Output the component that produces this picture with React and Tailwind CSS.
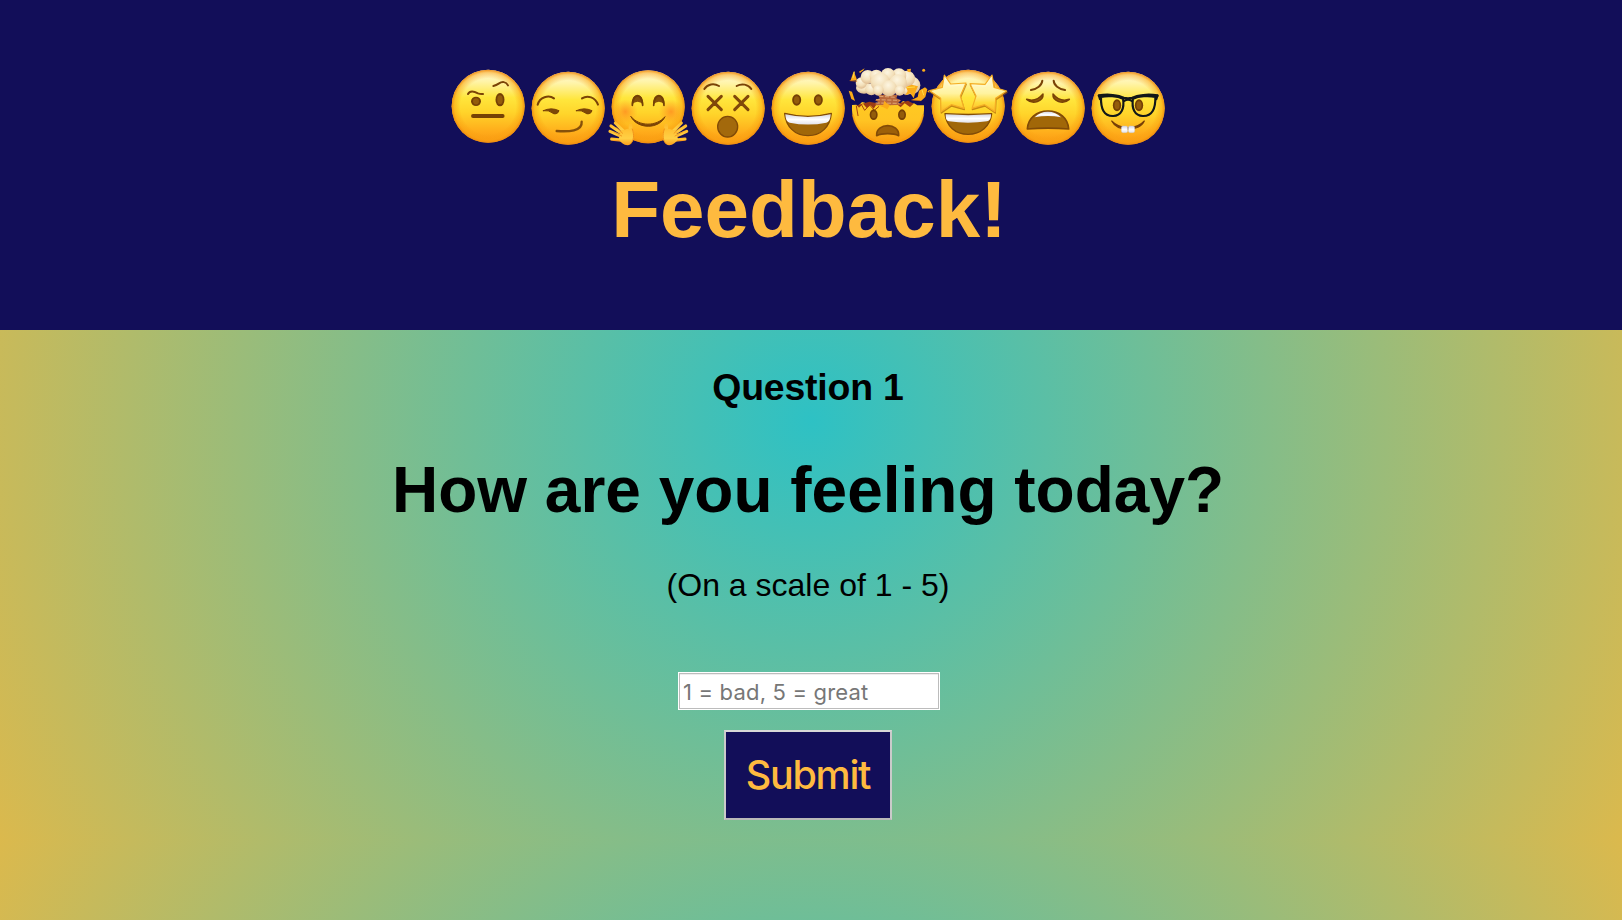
import React from "react";

const BROWN = "#7a4306";

function Emoji({ label, children }) {
  return (
    <svg
      role="img"
      aria-label={label}
      viewBox="24 15 240 288"
      className="h-24 w-20 shrink-0 overflow-visible"
      fill="none"
      strokeLinecap="round"
      strokeLinejoin="round"
    >
      {children}
    </svg>
  );
}

function Defs() {
  return (
    <svg className="absolute size-0" aria-hidden="true">
      <defs>
        <linearGradient id="face" x1="0" y1="0" x2="0" y2="1">
          <stop offset="0" stopColor="#fffbe0" />
          <stop offset="0.16" stopColor="#fff4a8" />
          <stop offset="0.38" stopColor="#ffe63c" />
          <stop offset="0.58" stopColor="#ffd42a" />
          <stop offset="0.85" stopColor="#ffab1a" />
          <stop offset="1" stopColor="#fa9a14" />
        </linearGradient>
        <radialGradient id="rim" cx="0.5" cy="0.5" r="0.5">
          <stop offset="0.76" stopColor="#f79a0c" stopOpacity="0" />
          <stop offset="0.92" stopColor="#f9a010" stopOpacity="0.5" />
          <stop offset="1" stopColor="#ee8a10" stopOpacity="0.95" />
        </radialGradient>
        <radialGradient id="blush">
          <stop offset="0" stopColor="#ff6a1c" stopOpacity="0.55" />
          <stop offset="1" stopColor="#ff7a1c" stopOpacity="0" />
        </radialGradient>
        <linearGradient id="star" x1="0" y1="0" x2="0" y2="1">
          <stop offset="0" stopColor="#fffbe0" />
          <stop offset="0.5" stopColor="#fff3a0" />
          <stop offset="0.75" stopColor="#ffdc3c" />
          <stop offset="1" stopColor="#fbb828" />
        </linearGradient>
        <linearGradient id="teeth" x1="0" y1="0" x2="0" y2="1">
          <stop offset="0" stopColor="#d4d6e4" />
          <stop offset="0.5" stopColor="#ffffff" />
          <stop offset="1" stopColor="#e2e2ea" />
        </linearGradient>
        <linearGradient id="hand" x1="0" y1="0" x2="0" y2="1">
          <stop offset="0" stopColor="#ffbd2e" />
          <stop offset="0.6" stopColor="#ffd045" />
          <stop offset="1" stopColor="#fb9d1c" />
        </linearGradient>
        <linearGradient id="bowl" x1="0" y1="0" x2="0" y2="1">
          <stop offset="0" stopColor="#ffca22" />
          <stop offset="0.45" stopColor="#ffc423" />
          <stop offset="1" stopColor="#f9980f" />
        </linearGradient>
        <radialGradient id="puff" cx="0.45" cy="0.3" r="0.75">
          <stop offset="0" stopColor="#fdf6e2" />
          <stop offset="0.55" stopColor="#f3e0ba" />
          <stop offset="1" stopColor="#dcb588" />
        </radialGradient>
      </defs>
    </svg>
  );
}

function Face({ cy }) {
  return (
    <>
      <circle cx="144.5" cy={cy} r="109.5" fill="url(#face)" />
      <circle cx="144.5" cy={cy} r="109.5" fill="url(#rim)" />
    </>
  );
}

function Eye({ x, y, rx = 13.5, ry = 17 }) {
  return (
    <>
      <ellipse cx={x} cy={y} rx={rx} ry={ry} fill="#754005" />
      <ellipse cx={x} cy={y} rx={rx * 0.6} ry={ry * 0.66} fill="#935c0b" />
    </>
  );
}

function RaisedBrow() {
  return (
    <Emoji label="face with raised eyebrow">
      <Face cy={154} />
      <path d="M84 117C91 104 104 110 114 115Q121 118 129 117" stroke={BROWN} strokeWidth="6" />
      <path d="M160 93Q169 91 176 86C186 79 198 79 204 91" stroke={BROWN} strokeWidth="6" />
      <Eye x={108} y={139} rx={15} ry={14} />
      <Eye x={180} y={134} rx={13.5} ry={20} />
      <path d="M99 183H188" stroke="#764105" strokeWidth="11.5" />
    </Emoji>
  );
}

function Smirk() {
  return (
    <Emoji label="smirking face">
      <Face cy={160} />
      <path d="M53 149C59 126 86 119 102 130" stroke={BROWN} strokeWidth="6" />
      <path d="M186 130C203 119 226 127 234 149" stroke={BROWN} strokeWidth="6" />
      <path d="M70 167Q94 156 117 167A12.500 12.500 0 0 1 96 173Q87 165 70 167Z" fill="#7d4708" stroke={BROWN} strokeWidth="3" />
      <path d="M169 167Q193 156 216 167A12.500 12.500 0 0 1 195 173Q186 165 169 167Z" fill="#7d4708" stroke={BROWN} strokeWidth="3" />
      <path d="M110 228C145 230 188 230 185 200" stroke="#86500a" strokeWidth="7" />
    </Emoji>
  );
}

function Hand() {
  return (
    <g>
      <g stroke="url(#hand)" strokeWidth="9.500">
        <path d="M78 236L46 204" />
        <path d="M70 238L33 213" />
        <path d="M68 246L30 229" />
        <path d="M72 256L35 252.500" />
        <path d="M92 240L91.500 212" strokeWidth="11" />
      </g>
      <path d="M62 232C74 220 88 222 97 219C103 236 106 254 92 267C80 277 62 264 56 252Z" fill="url(#hand)" />
      <path d="M97 222C104 242 101 258 91 267" stroke="#ee8812" strokeWidth="2.500" />
      <path d="M50 218L68 235M42 231L65 243" stroke="#e98212" strokeWidth="2" />
    </g>
  );
}

function Hug() {
  return (
    <Emoji label="hugging face">
      <Face cy={155} />
      <circle cx="76" cy="170" r="37" fill="url(#blush)" />
      <circle cx="213" cy="170" r="37" fill="url(#blush)" />
      <path d="M95 149C94 109 131 109 130 149Q113 132 95 149Z" fill="#84500a" />
      <path d="M159 149C158 109 195 109 194 149Q177 132 159 149Z" fill="#84500a" />
      <path d="M97 151C99 113 126 113 128 151M161 151C163 113 190 113 192 151" stroke="#734006" strokeWidth="5" />
      <path d="M93 185C118 215 169 215 195 185C178 223 112 224 93 185Z" fill="#7b4306" stroke="#7b4306" strokeWidth="3" />
      <Hand />
      <g transform="matrix(-1 0 0 1 290 0)">
        <Hand />
      </g>
    </Emoji>
  );
}

function CrossedEyes() {
  return (
    <Emoji label="face with crossed-out eyes">
      <Face cy={160} />
      <path d="M73 102C82 87 102 84 117 93" stroke={BROWN} strokeWidth="6" />
      <path d="M170 93C185 84 205 88 214 102" stroke={BROWN} strokeWidth="6" />
      <path d="M84 124L124 164M124 124L84 164M164 124L204 164M204 124L164 164" stroke="#80480a" strokeWidth="9" />
      <ellipse cx="143" cy="215" rx="30" ry="31" fill="#a3690c" stroke="#804a07" strokeWidth="4" />
    </Emoji>
  );
}

function Grin() {
  return (
    <Emoji label="grinning face">
      <Face cy={160} />
      <Eye x={110} y={135} />
      <Eye x={175} y={135} />
      <path d="M74 175Q144 193 214 175C210 214 185 242 144 242S78 214 74 175Z" fill="#a06709" stroke="#804b08" strokeWidth="4" />
      <path d="M76 178Q144 194 212 178C211 194 207 201 199 203Q144 214 89 203C81 201 77 194 76 178Z" fill="url(#teeth)" />
    </Emoji>
  );
}

function Exploding() {
  return (
    <Emoji label="exploding head">
      <path
        d="M36 150L49 149L54 154L66 141L75 143L80 151L91 143L102 152L118 144L130 151L140 140L152 151L165 143L178 149L189 138L202 143L213 148L222 145L232 151L252 151C256 219 208 268 144 268S32 219 36 150Z"
        fill="url(#bowl)"
      />
      <path d="M39 181C49 230 91 264 144 264S239 230 249 181" stroke="#f8960c" strokeWidth="6" opacity="0.65" />
      <path d="M51 151L57 158L69 146L80 159L92 151L101 161L112 145L88 140ZM151 153L170 147L182 157L194 145L210 156L221 146L204 137Z" fill="#9c3b13" />
      <path d="M49 153L54 182M65 150L74 166L89 150L103 166L116 155" stroke="#a6430f" strokeWidth="3" />
      <path d="M114 119H173L169 130L183 136L174 144L187 150L104 151L115 141L105 136L119 130Z" fill="#b9683b" />
      <path d="M119 124L169 127M109 134L178 136M108 144L177 145" stroke="#e0a876" strokeWidth="3" strokeDasharray="10 7" />
      <g fill="url(#puff)">
        <ellipse cx="72" cy="99" rx="24" ry="17" />
        <circle cx="64" cy="84" r="17" />
        <circle cx="94" cy="103" r="18" />
        <circle cx="214" cy="91" r="27" />
        <circle cx="200" cy="102" r="18" />
        <circle cx="83" cy="66" r="21" />
        <circle cx="109" cy="64" r="20" />
        <circle cx="201" cy="71" r="24" />
        <circle cx="177" cy="62" r="22" />
        <circle cx="144" cy="61" r="22" />
        <circle cx="121" cy="82" r="29" />
        <circle cx="174" cy="85" r="27" />
        <circle cx="147" cy="100" r="24" />
        <circle cx="115" cy="106" r="16" />
        <circle cx="179" cy="107" r="15" />
      </g>
      <g fill="#fbab19">
        <path d="M41 49L48 66L51 76L31 78Z" />
        <path d="M57 50L74 40L70 46L60 54Z" />
        <path d="M26 107L36 110L45 138L34 132Z" />
        <path d="M198 96L215 89L234 94L227 110L221 130L211 115L196 121L203 108Z" />
        <path d="M215 135L233 126L237 107L255 97L262 103L256 126L243 138Z" />
        <path d="M133 137L142 146L150 150L142 163L130 157L121 154L130 149Z" />
        <path d="M201 43L213 41L211 52L203 50Z" />
        <circle cx="251" cy="46" r="4.500" />
        <path d="M262 109L267 106L268 114Z" />
      </g>
      <path d="M43 51L39 68M201 98L224 96M246 105L251 120" stroke="#ffdb46" strokeWidth="3" />
      <path d="M30 77L50 79M215 135L240 137" stroke="#c9640d" strokeWidth="2" />
      <Eye x={101} y={179} rx={12} ry={16} />
      <Eye x={186} y={179} rx={12} ry={16} />
      <path d="M110 242C107 202 179 202 176 242C160 234 126 234 110 242Z" fill="#9d6009" stroke="#824b07" strokeWidth="5" />
    </Emoji>
  );
}

function Star({ d, shade }) {
  return (
    <>
      <path d={d} transform="translate(1 4)" fill="#a96006" opacity="0.65" stroke="#a96006" strokeWidth="4" />
      <path d={d} fill="url(#star)" stroke="#f5ae24" strokeWidth="3.500" />
      <path d={shade} stroke="#fffbd6" strokeWidth="3" opacity="0.5" />
    </>
  );
}

function StarStruck() {
  return (
    <Emoji label="star-struck face">
      <Face cy={154} />
      <path d="M75 176Q144 180 215 176C211 214 182 238 144 238S79 214 75 176Z" fill="#a06709" stroke="#804b08" strokeWidth="4" />
      <path d="M77 178Q144 183 213 178C213 192 208 198 201 199Q144 207 87 199C80 198 77 192 77 178Z" fill="url(#teeth)" />
      <Star d="M73 60L92 87L138 84L121 123L132 160L94 149L63 170L62 130L29 107L67 97Z" shade="M75 69L89 93L129 90" />
      <Star d="M216 60L222 97L260 108L227 130L225 170L194 149L156 160L168 123L150 86L195 88Z" shade="M213 68L197 94L157 90" />
    </Emoji>
  );
}

function Weary() {
  return (
    <Emoji label="weary face">
      <Face cy={160} />
      <path d="M93 105C111 102 126 91 127 77" stroke={BROWN} strokeWidth="6" />
      <path d="M161 77C162 91 176 102 195 105" stroke={BROWN} strokeWidth="6" />
      <path d="M80 133C99 139 116 133 129 117C131 138 99 150 80 133Z" fill="#925b0b" stroke={BROWN} strokeWidth="4.500" />
      <path d="M208 133C189 139 172 133 159 117C157 138 189 150 208 133Z" fill="#925b0b" stroke={BROWN} strokeWidth="4.500" />
      <path d="M82 222C84 189 110 168 144 168S204 189 206 222Q144 217 82 222Z" fill="#a16708" stroke="#804a07" strokeWidth="5" />
      <path d="M104 187C122 165 164 164 183 187Q144 179 104 187Z" fill="url(#teeth)" />
    </Emoji>
  );
}

function Nerd() {
  return (
    <Emoji label="nerd face">
      <Face cy={160} />
      <Eye x={111} y={151} rx={12.5} ry={18} />
      <Eye x={177} y={151} rx={12.5} ry={18} />
      <g stroke="#121719">
        <path d="M63 126C82 121 112 123 129 131C134 160 124 184 98 183C72 183 62 162 63 126Z" strokeWidth="6.500" />
        <path d="M226 126C207 121 176 123 159 131C154 160 164 184 190 183C216 183 227 162 226 126Z" strokeWidth="6.500" />
        <path d="M57 122C84 117 116 121 131 129Q144 132 157 129C172 121 204 117 232 122" strokeWidth="8" />
        <path d="M133 138Q144 131 155 138" strokeWidth="6" />
        <path d="M57 122L60 132M232 122L229 132" strokeWidth="7" />
      </g>
      <path d="M95 198C121 225 168 225 193 198C178 231 112 231 95 198Z" fill="#784007" stroke="#784007" strokeWidth="3.500" />
      <rect x="124" y="213" width="19" height="20" rx="5" fill="url(#teeth)" stroke="#c9c4c4" strokeWidth="1" />
      <rect x="145" y="213" width="19" height="20" rx="5" fill="url(#teeth)" stroke="#c9c4c4" strokeWidth="1" />
    </Emoji>
  );
}

export default function App() {
  return (
    <div className="h-[920px] overflow-hidden bg-[radial-gradient(circle,#2ec1c4_0%,#dbb94d_100%)] bg-[length:100%_840px] font-['Liberation_Sans',Arial,sans-serif] text-black">
      <Defs />
      <header className="flex h-[330px] flex-col items-center bg-[#120e59] pt-[60px] pr-1.5">
        <div className="flex">
          <RaisedBrow />
          <Smirk />
          <Hug />
          <CrossedEyes />
          <Grin />
          <Exploding />
          <StarStruck />
          <Weary />
          <Nerd />
        </div>
        <h1 className="mt-1.5 pl-0.5 text-[80px] leading-[96px] font-bold text-[#feba3f]">Feedback!</h1>
      </header>
      <main className="flex flex-col items-center pt-[37px] pr-1.5">
        <h3 className="text-[37.44px] leading-10 font-bold tracking-[-0.2px]">Question 1</h3>
        <h2 className="mt-[47px] text-[64px] leading-[72px] font-bold">How are you feeling today?</h2>
        <p className="mt-[39px] text-[32px] leading-10">(On a scale of 1 - 5)</p>
        <form className="mt-[67px] flex flex-col items-center" onSubmit={(e) => e.preventDefault()}>
          <div className="ml-0.5 h-[38px] w-[262px] bg-white p-px">
            <input
              type="text"
              placeholder="1 = bad, 5 = great"
              className="block h-9 w-[260px] border border-[#bcbcbc] bg-white px-[3px] pt-px font-[Inter,sans-serif] text-[22px] tracking-[0.18px] shadow-[inset_0_1px_0_#eeeeee] outline-none placeholder:text-[#777777]"
            />
          </div>
          <button
            type="submit"
            className="mt-5 h-[90px] w-[168px] border-2 border-[#cacaca] border-t-[#d8d8d8] border-b-[#b9b9b9] bg-[#120e59] pt-px font-[Inter,sans-serif] text-[39.5px] leading-none font-[450] tracking-[-1.3px] text-[#feba3f]"
          >
            Submit
          </button>
        </form>
      </main>
    </div>
  );
}
